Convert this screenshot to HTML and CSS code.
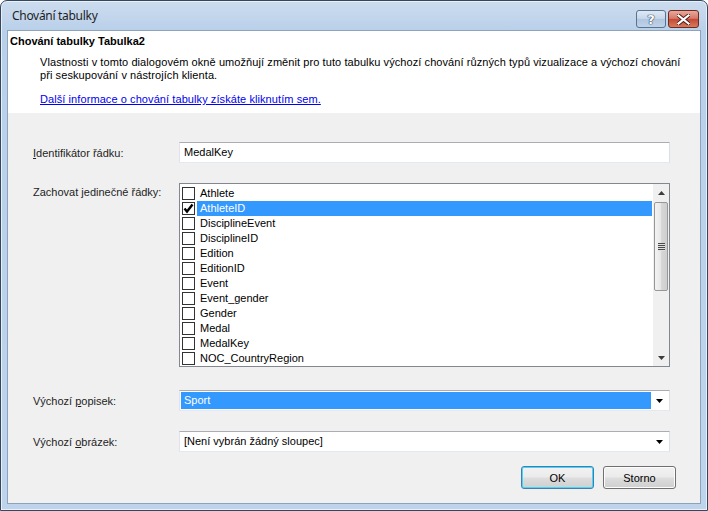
FILE: index.html
```html
<!DOCTYPE html>
<html lang="cs">
<head>
<meta charset="utf-8">
<title>Chování tabulky</title>
<link rel="stylesheet" href="styles.css">
</head>
<body>
<div class="window">
  <div class="titlebar">
    <span class="title">Chování tabulky</span>
    <div class="caption-buttons">
      <span class="cap-btn help">?</span>
      <span class="cap-btn close">
        <svg width="13" height="11" viewBox="0 0 13 11"><path d="M1.5 1.5 L11.5 9.5 M11.5 1.5 L1.5 9.5" stroke="#4a1a14" stroke-width="4" stroke-linecap="square"/><path d="M1.5 1.5 L11.5 9.5 M11.5 1.5 L1.5 9.5" stroke="#fff" stroke-width="2.2" stroke-linecap="square"/></svg>
      </span>
    </div>
  </div>
  <div class="client">
    <div class="header">
      <div class="heading">Chování tabulky Tabulka2</div>
      <p class="desc">Vlastnosti v tomto dialogovém okně umožňují změnit pro tuto tabulku výchozí chování různých typů vizualizace a výchozí chování při seskupování v nástrojích klienta.</p>
      <a class="link" href="#">Další informace o chování tabulky získáte kliknutím sem.</a>
    </div>
    <div class="body">
      <div class="row row-id">
        <label class="label"><u>I</u>dentifikátor řádku:</label>
        <div class="textbox">MedalKey</div>
      </div>
      <div class="row row-list">
        <label class="label label-top">Zachovat <u>j</u>edinečné řádky:</label>
        <div class="listbox">
          <div class="items">
            <div class="item"><span class="check"></span><span class="text">Athlete</span></div>
            <div class="item"><span class="check checked"><svg width="11" height="11" viewBox="0 0 11 11"><path d="M1.5 5.5 L4 8.5 L9.5 1.5" stroke="#000" stroke-width="2.4" fill="none"/></svg></span><span class="text selected">AthleteID</span></div>
            <div class="item"><span class="check"></span><span class="text">DisciplineEvent</span></div>
            <div class="item"><span class="check"></span><span class="text">DisciplineID</span></div>
            <div class="item"><span class="check"></span><span class="text">Edition</span></div>
            <div class="item"><span class="check"></span><span class="text">EditionID</span></div>
            <div class="item"><span class="check"></span><span class="text">Event</span></div>
            <div class="item"><span class="check"></span><span class="text">Event_gender</span></div>
            <div class="item"><span class="check"></span><span class="text">Gender</span></div>
            <div class="item"><span class="check"></span><span class="text">Medal</span></div>
            <div class="item"><span class="check"></span><span class="text">MedalKey</span></div>
            <div class="item"><span class="check"></span><span class="text">NOC_CountryRegion</span></div>
          </div>
          <div class="scrollbar">
            <div class="arrow up"><svg width="7" height="4" viewBox="0 0 7 4"><path d="M0 4 L3.5 0 L7 4 Z" fill="#3c3c3c"/></svg></div>
            <div class="track">
              <div class="thumb"><span class="grip"></span><span class="grip"></span><span class="grip"></span><span class="grip"></span></div>
            </div>
            <div class="arrow down"><svg width="7" height="4" viewBox="0 0 7 4"><path d="M0 0 L3.5 4 L7 0 Z" fill="#3c3c3c"/></svg></div>
          </div>
        </div>
      </div>
      <div class="row row-popisek">
        <label class="label">Výchozí <u>p</u>opisek:</label>
        <div class="combo">
          <span class="combo-value selected-value">Sport</span>
          <span class="combo-arrow"><svg width="7" height="4" viewBox="0 0 7 4"><path d="M0 0 L3.5 4 L7 0 Z" fill="#000"/></svg></span>
        </div>
      </div>
      <div class="row row-obrazek">
        <label class="label">Výchozí <u>o</u>brázek:</label>
        <div class="combo">
          <span class="combo-value">[Není vybrán žádný sloupec]</span>
          <span class="combo-arrow"><svg width="7" height="4" viewBox="0 0 7 4"><path d="M0 0 L3.5 4 L7 0 Z" fill="#000"/></svg></span>
        </div>
      </div>
      <div class="buttons">
        <button class="btn default">OK</button>
        <button class="btn">Storno</button>
      </div>
    </div>
  </div>
</div>
</body>
</html>
```
FILE: styles.css
```css
* { box-sizing: border-box; }

html, body {
  margin: 0;
  padding: 0;
  width: 708px;
  height: 511px;
  overflow: hidden;
  background: #fff;
}

body {
  font-family: "Liberation Sans", Arial, sans-serif;
  font-size: 11px;
  color: #000;
}

.window {
  width: 708px;
  height: 511px;
  border: 1px solid #34475c;
  border-radius: 7px 7px 0 0;
  background: linear-gradient(to bottom, #cddcee 0px, #b9d0ea 30px, #bdd4ec 100%);
  padding: 0 6px 6px 6px;
  display: flex;
  flex-direction: column;
  box-shadow: inset 0 0 0 1px #e8f0fa;
}

.titlebar {
  height: 29px;
  display: flex;
  align-items: flex-start;
  justify-content: space-between;
  flex: none;
}

.title {
  font-family: "Noto Sans", "Liberation Sans", sans-serif;
  font-size: 12px;
  color: #1e1e1e;
  padding: 6px 0 0 5px;
  letter-spacing: -0.3px;
}

.caption-buttons {
  display: flex;
  gap: 2px;
  margin-top: 9px;
  margin-right: 2px;
}

.cap-btn {
  height: 18px;
  border: 1px solid #5a7290;
  border-radius: 3px;
  display: flex;
  align-items: center;
  justify-content: center;
}

.help {
  width: 30px;
  background: linear-gradient(to bottom, #dfe9f5 0%, #c6d6ea 48%, #b0c6e0 52%, #bfd2e8 100%);
  font-family: "DejaVu Sans", sans-serif;
  font-weight: bold;
  font-size: 13px;
  color: #fff;
  text-shadow: 0 0 1px #2c3e55, 0 0 1px #2c3e55, 0 0 1px #2c3e55;
  line-height: 1;
}

.close {
  width: 31px;
  border-color: #6b2a22;
  background: linear-gradient(to bottom, #e9a99b 0%, #d67a68 46%, #c24a36 52%, #d87a5c 100%);
}

.client {
  flex: 1;
  border: 1px solid #8ea3ba;
  background: #f0f0f0;
  display: flex;
  flex-direction: column;
}

.header {
  background: #fff;
  height: 82px;
  padding: 3px 8px 0 2px;
  flex: none;
}

.heading {
  font-weight: bold;
  font-size: 11px;
  line-height: 14px;
}

.desc {
  margin: 8px 0 0 30px;
  line-height: 13px;
  width: 644px;
  letter-spacing: 0.08px;
}

.link {
  display: inline-block;
  margin: 11px 0 0 30px;
  color: #0000ee;
  text-decoration: underline;
  letter-spacing: 0.08px;
}

.body {
  flex: 1;
  padding: 29px 30px 0 25px;
  display: flex;
  flex-direction: column;
}

.row {
  display: flex;
  align-items: center;
}

.label {
  width: 146px;
  flex: none;
  color: #1e1e1e;
}

.label-top {
  align-self: flex-start;
  padding-top: 3px;
}

.textbox {
  flex: 1;
  height: 21px;
  background: #fff;
  border: 1px solid #abadb3;
  border-color: #abadb3 #dbdfe6 #e3e9ef #e2e3ea;
  padding: 3px 0 0 4px;
}

.row-list { margin-top: 20px; }

.listbox {
  flex: 1;
  height: 184px;
  border: 1px solid #828790;
  background: #fff;
  display: flex;
}

.items {
  flex: 1;
  padding: 2px 0 0 2px;
}

.item {
  height: 15px;
  display: flex;
  align-items: center;
}

.check {
  width: 13px;
  height: 13px;
  border: 1px solid #333;
  background: #fff;
  flex: none;
  display: flex;
  align-items: center;
  justify-content: center;
}

.text {
  flex: 1;
  height: 15px;
  line-height: 15px;
  padding-left: 3px;
  margin-left: 2px;
}

.text.selected {
  background: #3399ff;
  color: #fff;
}

.scrollbar {
  width: 17px;
  flex: none;
  background: #f0f0f0;
  border-left: 1px solid #fff;
  display: flex;
  flex-direction: column;
}

.arrow {
  height: 17px;
  display: flex;
  align-items: center;
  justify-content: center;
  flex: none;
}

.track {
  flex: 1;
  padding: 0 1px;
}

.thumb {
  margin-top: 1px;
  height: 89px;
  border: 1px solid #979797;
  border-radius: 2px;
  background: linear-gradient(to right, #f3f3f3 0%, #e8e8e8 45%, #d6d6d6 55%, #cfcfcf 100%);
  display: flex;
  flex-direction: column;
  align-items: center;
  justify-content: center;
  gap: 1px;
}

.grip {
  width: 7px;
  height: 1px;
  background: #4a4a4a;
  box-shadow: 0 1px 0 #e0e0e0;
}

.row-popisek { margin-top: 23px; }
.row-obrazek { margin-top: 20px; }

.combo {
  flex: 1;
  height: 21px;
  background: #fff;
  border: 1px solid #abadb3;
  border-color: #abadb3 #dbdfe6 #e3e9ef #e2e3ea;
  display: flex;
  align-items: stretch;
  padding: 1px;
}

.combo-value {
  flex: 1;
  padding-left: 3px;
  line-height: 17px;
}

.combo-value.selected-value {
  background: #3399ff;
  color: #fff;
}

.combo-arrow {
  width: 17px;
  display: flex;
  align-items: center;
  justify-content: center;
  flex: none;
}

.buttons {
  display: flex;
  justify-content: flex-end;
  gap: 9px;
  margin-top: 14px;
  margin-right: -6px;
}

.btn {
  width: 73px;
  height: 23px;
  font-family: inherit;
  font-size: 11px;
  color: #000;
  border: 1px solid #707070;
  border-radius: 3px;
  background: linear-gradient(to bottom, #f2f2f2 0%, #ebebeb 48%, #dddddd 52%, #cfcfcf 100%);
  box-shadow: inset 0 0 0 1px #fcfcfc;
  padding: 0;
}

.btn.default {
  border-color: #3c7fb1;
  box-shadow: inset 0 0 0 1px #48d5fa;
}
```
